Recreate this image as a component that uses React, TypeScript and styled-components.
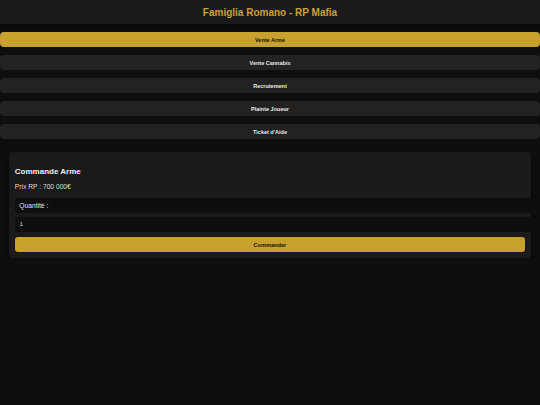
import React, { useState } from "react";
import styled, { createGlobalStyle } from "styled-components";

const GlobalStyle = createGlobalStyle`
  html, body {
    margin: 0;
    padding: 0;
    background-color: #0e0e0e;
    overflow-x: hidden;
  }

  body {
    font-family: "Liberation Sans", Arial, sans-serif;
    color: #e6e6e6;
  }

  * {
    box-sizing: border-box;
  }
`;

const Header = styled.header`
  height: 24px;
  background-color: #1b1b1b;
  box-shadow: 0px 2px 6px rgba(0, 0, 0, 0.6);
  display: flex;
  align-items: center;
  justify-content: center;
`;

const Title = styled.h1`
  margin: 0;
  font-size: 10px;
  font-weight: 700;
  color: #c9a032;
`;

const Nav = styled.nav`
  display: flex;
  flex-direction: column;
  gap: 8px;
  margin-top: 8px;
`;

const NavButton = styled.button<{ $active?: boolean }>`
  height: 15px;
  width: 100%;
  border: none;
  border-radius: 4px;
  padding: 0;
  font-family: "Liberation Sans", Arial, sans-serif;
  font-size: 5.5px;
  font-weight: 700;
  cursor: pointer;
  background-color: ${(p) => (p.$active ? "#c8a02e" : "#222222")};
  color: ${(p) => (p.$active ? "#111111" : "#e8e8e8")};
`;

const Card = styled.section`
  margin: 13px 9px 0 8.5px;
  padding: 6.5px 6px 6px 6.3px;
  background-color: #1a1a1a;
  border-radius: 4px;
  box-shadow: 0px 2px 6px rgba(0, 0, 0, 0.5);
`;

const CardTitle = styled.h3`
  margin: 8px 0 0 0;
  font-size: 8px;
  line-height: 9.2px;
  font-weight: 700;
  color: #eeeeee;
`;

const Price = styled.p`
  margin: 7.5px 0 0 0;
  font-size: 6.7px;
  line-height: 7.7px;
  color: #dddddd;
`;

const Label = styled.label`
  display: block;
  margin-top: 7.4px;
  width: calc(100% + 20px);
  height: 15px;
  padding: 0 4.5px;
  line-height: 15px;
  font-size: 6.7px;
  color: #e2e2e2;
  background-color: #0e0e0e;
  border-radius: 3px;
`;

const Input = styled.input`
  display: block;
  margin-top: 4px;
  width: calc(100% + 20px);
  height: 14.4px;
  padding: 0 5px;
  border: none;
  outline: none;
  border-radius: 3px;
  font-family: "Liberation Sans", Arial, sans-serif;
  font-size: 5.5px;
  color: #e8e8e8;
  background-color: #0e0e0e;
`;

const OrderButton = styled.button`
  display: block;
  margin-top: 5.6px;
  width: 100%;
  height: 15px;
  padding: 0;
  border: none;
  border-radius: 3px;
  font-family: "Liberation Sans", Arial, sans-serif;
  font-size: 5.6px;
  font-weight: 700;
  color: #111111;
  background-color: #c8a02e;
  cursor: pointer;
`;

const sections = [
  "Vente Arme",
  "Vente Cannabis",
  "Recrutement",
  "Plainte Joueur",
  "Ticket d'Aide",
];

export default function App() {
  const [active, setActive] = useState("Vente Arme");
  const [qty, setQty] = useState("1");

  return (
    <>
      <GlobalStyle />
      <Header>
        <Title>Famiglia Romano - RP Mafia</Title>
      </Header>

      <Nav>
        {sections.map((s) => (
          <NavButton key={s} type="button" $active={s === active} onClick={() => setActive(s)}>
            {s}
          </NavButton>
        ))}
      </Nav>

      <Card>
        <CardTitle>Commande Arme</CardTitle>
        <Price>Prix RP : 700 000€</Price>
        <Label htmlFor="qty">Quantité :</Label>
        <Input id="qty" type="text" value={qty} onChange={(e) => setQty(e.target.value)} />
        <OrderButton type="button">Commander</OrderButton>
      </Card>
    </>
  );
}
